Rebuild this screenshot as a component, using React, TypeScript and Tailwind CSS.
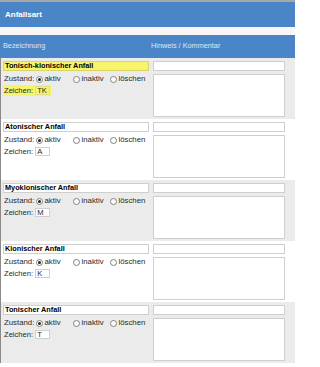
/** Anfallsart – Liste der Anfallsarten mit Zustand, Zeichen und Kommentar. */

type Anfall = { name: string; zeichen: string; highlight?: boolean }

const ANFAELLE: Anfall[] = [
  { name: 'Tonisch-klonischer Anfall', zeichen: 'TK', highlight: true },
  { name: 'Atonischer Anfall', zeichen: 'A' },
  { name: 'Myoklonischer Anfall', zeichen: 'M' },
  { name: 'Klonischer Anfall', zeichen: 'K' },
  { name: 'Tonischer Anfall', zeichen: 'T' },
]

const ZUSTAENDE = ['aktiv', 'inaktiv', 'löschen']

function Radio({ checked }: { checked: boolean }) {
  return (
    <span className="flex h-[7px] w-[7px] shrink-0 items-center justify-center rounded-full border border-[#808080] bg-white">
      {checked && <span className="h-[3px] w-[3px] rounded-full bg-[#222]" />}
    </span>
  )
}

function Row({ a, gray }: { a: Anfall; gray: boolean }) {
  return (
    <div className={`flex h-[61px] border-l border-[#8a8a8a] ${gray ? 'bg-[#ebebeb]' : 'bg-white'}`}>
      <div className="ml-[2px] w-[146px] pt-[3px]">
        <div
          className={`flex h-[10px] items-center border px-[1px] text-[7.3px] font-bold text-black ${
            a.highlight ? 'border-[#d9d36a] bg-[#f8f46a]' : 'border-[#cfcfcf] bg-white'
          }`}
        >
          {a.name}
        </div>
        <div className="mt-[3px] flex h-[10px] items-center pl-[1px] text-[7.8px] text-[#2a2a2a]">
          <span className="w-[32px]">Zustand:</span>
          {ZUSTAENDE.map((z, i) => (
            <span key={z} className="flex w-[37px] items-center gap-[1.5px]">
              <Radio checked={i === 0} />
              <span>{z}</span>
            </span>
          ))}
        </div>
        <div className="mt-[1px] flex h-[11px] items-center text-[7.6px] text-[#2a2a2a]">
          <span className={`flex h-full items-center px-[1px] ${a.highlight ? 'bg-[#f8f46a]' : ''}`}>
            <span className="mr-[2px]">Zeichen:</span>
            <span
              className={`flex h-[9px] w-[15px] items-center border px-[1px] ${
                a.highlight ? 'border-[#e3dd86] bg-[#f8f46a]' : 'border-[#cfcfcf] bg-white'
              }`}
            >
              {a.zeichen}
            </span>
          </span>
        </div>
      </div>
      <div className="ml-[4px] w-[132px] pt-[3px]">
        <div className="h-[10px] border border-[#cfcfcf] bg-white" />
        <div className="mt-[3px] h-[43px] border border-[#cfcfcf] bg-white" />
      </div>
    </div>
  )
}

export default function App() {
  return (
    <div
      className="h-[367px] w-[295px] overflow-hidden bg-white"
      style={{ fontFamily: '"Liberation Sans", Arial, sans-serif' }}
    >
      <div className="h-[2px] bg-[#a8a8a8]" />
      <div className="flex h-[25px] items-center bg-[#4a86c7] pl-[5px] text-[8px] font-bold text-white">
        Anfallsart
      </div>
      <div className="h-[8px] bg-[#faf6f6]" />
      <div className="flex h-[23px] items-center bg-[#4a86c7] text-[7.3px] text-[#dde8f6]">
        <span className="w-[151px] pl-[3px]">Bezeichnung</span>
        <span>Hinweis / Kommentar</span>
      </div>
      {ANFAELLE.map((a, i) => (
        <Row key={a.name} a={a} gray={i % 2 === 0} />
      ))}
    </div>
  )
}
